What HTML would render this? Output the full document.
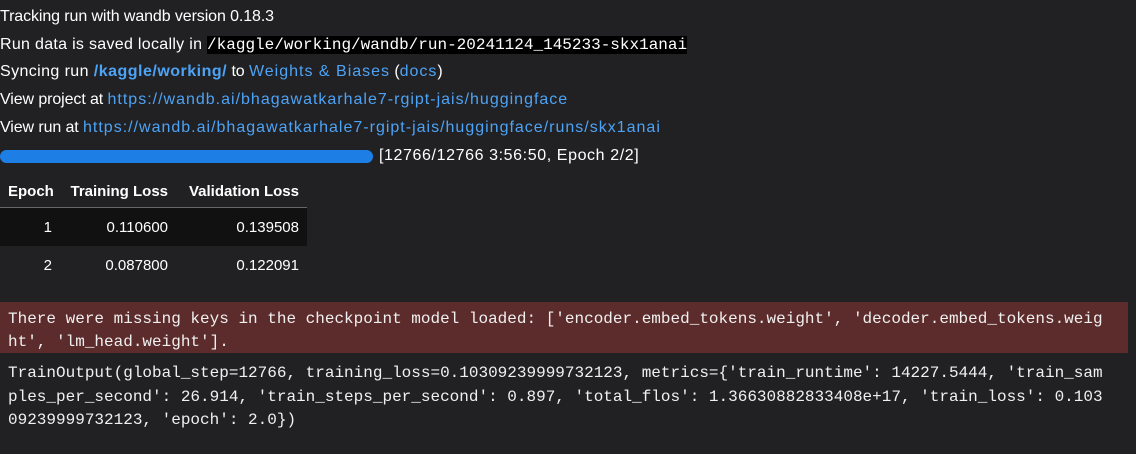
<!DOCTYPE html>
<html><head><style>
body{margin:0;background:#212124;color:#fff;width:1136px;height:454px;overflow:hidden;font-family:"Liberation Sans",sans-serif;}
.l{position:absolute;left:0;font-size:16px;white-space:nowrap;letter-spacing:-0.1px}
a{color:#4da3f5;text-decoration:none;letter-spacing:1px}
code{font-family:"Liberation Mono",monospace;font-size:16px;background:#000;letter-spacing:0}
.mono{font-family:"Liberation Mono",monospace;font-size:16px;line-height:23px;white-space:pre;color:#f0f0f0}
table{position:absolute;left:0;top:175px;border-collapse:collapse;font-size:15px;width:307px;table-layout:fixed}
th{text-align:right;padding:0 8px;height:32px;border-bottom:1px solid #666;font-weight:bold}
td{text-align:right;padding:0 8px;height:38px}
</style></head><body>
<div class="l" style="top:8px">Tracking run with wandb version 0.18.3</div>
<div class="l" style="top:36px;letter-spacing:0.3px">Run data is saved locally in <code>/kaggle/working/wandb/run-20241124_145233-skx1anai</code></div>
<div class="l" style="top:63px"><span style="letter-spacing:0.4px">Syncing run </span><a style="font-weight:bold;letter-spacing:0.5px">/kaggle/working/</a> to <a>Weights &amp; Biases</a> (<a>docs</a>)</div>
<div class="l" style="top:91px">View project at <a>https://wandb.ai/bhagawatkarhale7-rgipt-jais/huggingface</a></div>
<div class="l" style="top:119px">View run at <a>https://wandb.ai/bhagawatkarhale7-rgipt-jais/huggingface/runs/skx1anai</a></div>
<div style="position:absolute;left:0;top:150px;width:373px;height:13px;border-radius:7px;background:#1d7fe6"></div>
<div class="l" style="top:147px;left:379px;letter-spacing:0.6px">[12766/12766 3:56:50, Epoch 2/2]</div>
<table>
<colgroup><col style="width:60px"><col style="width:116px"><col style="width:131px"></colgroup>
<tr><th>Epoch</th><th>Training Loss</th><th>Validation Loss</th></tr>
<tr style="background:#111"><td>1</td><td>0.110600</td><td>0.139508</td></tr>
<tr><td>2</td><td>0.087800</td><td>0.122091</td></tr>
</table>
<div class="mono" style="position:absolute;left:0;top:302px;width:1128px;height:51px;background:#5c2b2b;padding:6px 0 0 8px;box-sizing:border-box">There were missing keys in the checkpoint model loaded: ['encoder.embed_tokens.weight', 'decoder.embed_tokens.weig
ht', 'lm_head.weight'].</div>
<div class="mono" style="position:absolute;left:8px;top:362px;line-height:23.5px">TrainOutput(global_step=12766, training_loss=0.10309239999732123, metrics={'train_runtime': 14227.5444, 'train_sam
ples_per_second': 26.914, 'train_steps_per_second': 0.897, 'total_flos': 1.36630882833408e+17, 'train_loss': 0.103
09239999732123, 'epoch': 2.0})</div>
</body></html>
